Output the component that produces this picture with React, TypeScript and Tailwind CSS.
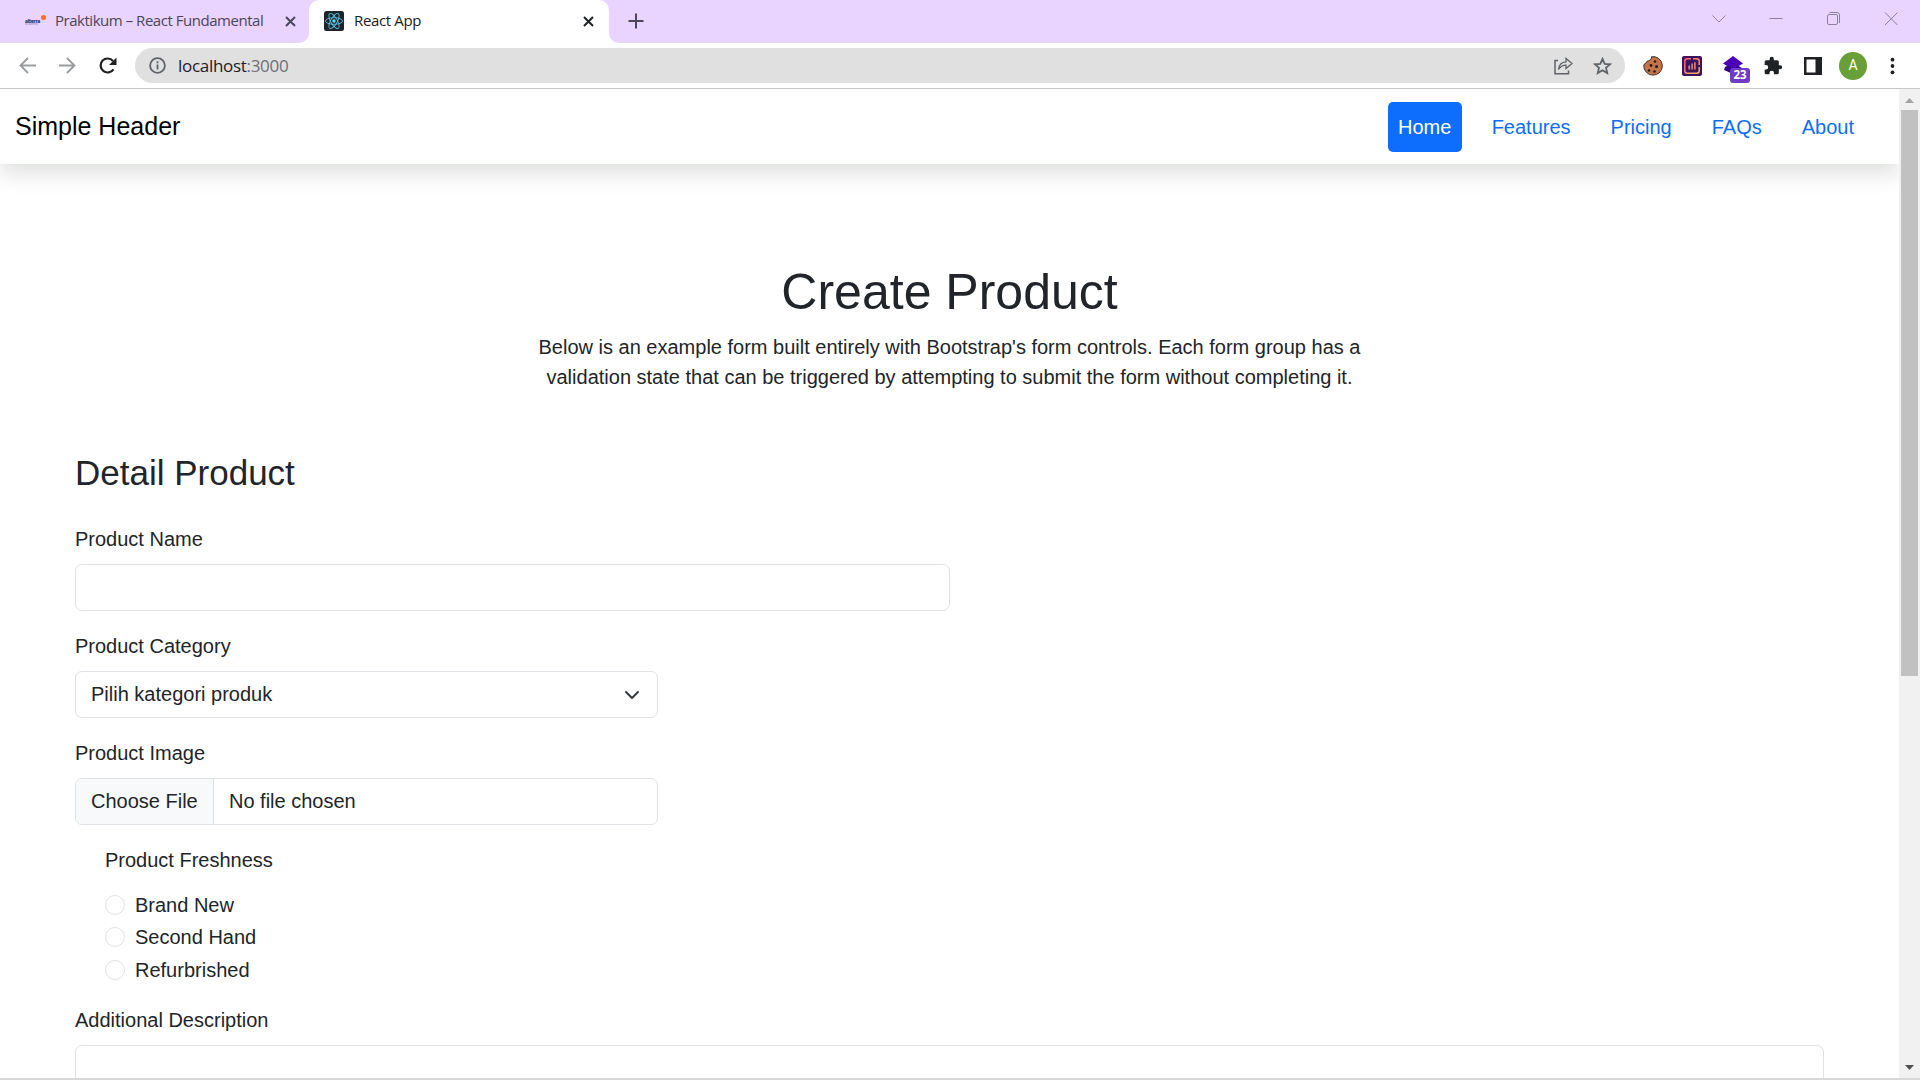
import React from "react";

const ui = "font-['Open_Sans','Noto_Sans',sans-serif]";

function ReactLogo() {
  return (
    <svg width="20" height="20" viewBox="0 0 20 20">
      <rect width="20" height="20" rx="2.5" fill="#20232a" />
      <g fill="none" stroke="#53c1de" strokeWidth="0.9">
        <ellipse cx="10" cy="10" rx="8.6" ry="3.3" />
        <ellipse cx="10" cy="10" rx="8.6" ry="3.3" transform="rotate(60 10 10)" />
        <ellipse cx="10" cy="10" rx="8.6" ry="3.3" transform="rotate(120 10 10)" />
      </g>
      <circle cx="10" cy="10" r="1.7" fill="#61dafb" />
    </svg>
  );
}

function AlterraLogo() {
  return (
    <div className="relative h-5 w-5 font-['Inter',sans-serif]">
      <span className="absolute left-0 top-[6px] text-[5px] leading-[8px] font-extrabold tracking-[-0.2px] text-[#1b2f66]">alterra</span>
      <span className="absolute left-0 top-[11px] text-[3px] leading-[5px] text-[#8b86ab]">academy</span>
      <span className="absolute left-[15.5px] top-[4px] h-[5px] w-[5px] rounded-full bg-[#ff6a21]" />
    </div>
  );
}

function Close({ color, className }: { color: string; className: string }) {
  return (
    <svg className={className} width="11" height="11" viewBox="0 0 11 11" stroke={color} strokeWidth="2" fill="none">
      <path d="M1 1l9 9M10 1l-9 9" />
    </svg>
  );
}

function TabStrip() {
  return (
    <div className="relative flex h-[43px] shrink-0 bg-[#e8d4ff]">
      <div className="flex w-[309px] items-center pl-[25px] pb-[1px]">
        <AlterraLogo />
        <span className={"ml-[10px] w-[212px] whitespace-nowrap pb-[2px] text-[15px] tracking-[-0.47px] text-[#4d4659] " + ui}>Praktikum – React Fundamental</span>
        <Close color="#4d4659" className="ml-[17.5px]" />
      </div>
      <div className="relative flex w-[300px] items-center rounded-t-[10px] bg-white pl-[15px] pb-[1px]">
        <svg className="absolute bottom-0 left-[-10px]" width="10" height="10"><path d="M10 0v10H0A10 10 0 0 0 10 0" fill="#fff" /></svg>
        <svg className="absolute bottom-0 right-[-10px]" width="10" height="10"><path d="M0 0v10h10A10 10 0 0 1 0 0" fill="#fff" /></svg>
        <ReactLogo />
        <span className={"ml-[10px] w-[229px] pb-[2px] text-[15px] tracking-[-0.35px] text-[#202124] " + ui}>React App</span>
        <Close color="#202124" className="ml-0" />
      </div>
      <svg className="ml-[19px] mt-[13px]" width="16" height="16" stroke="#4d4659" strokeWidth="2"><path d="M.5 8h15M8 .5v15" /></svg>
      <svg className="ml-auto mr-[21px] mt-[11px]" width="187" height="15" fill="none" stroke="#8d7f9e" strokeWidth="1">
        <path d="M.5 4.500l6.500 6.500 6.500-6.500M57.500 7.500h13M173 1.500l12.500 12.500M185.500 1.500L173 14" />
        <rect x="115.500" y="3.500" width="10" height="10" rx="1.500" />
        <path d="M117.500 1.500h7.500a2.500 2.500 0 0 1 2.500 2.500v8" />
      </svg>
    </div>
  );
}

function Toolbar() {
  return (
    <div className="flex h-[46px] shrink-0 items-center border-b border-[#c9c9c9] bg-white">
      <svg className="ml-[19px]" width="17" height="17" fill="none" stroke="#9a9b9d" strokeWidth="1.800"><path d="M17 8.500H1.500M9 1L1.500 8.500 9 16" /></svg>
      <svg className="ml-[23px]" width="17" height="17" fill="none" stroke="#9a9b9d" strokeWidth="1.800"><path d="M0 8.500h15.500M8 1l7.500 7.500L8 16" /></svg>
      <svg className="ml-[23px]" width="18" height="17" viewBox="0 0 18 17">
        <path d="M14.500 12.300A7 7 0 1 1 14 4" fill="none" stroke="#202124" strokeWidth="2.200" />
        <path d="M17.500 .5v7.500H10z" fill="#202124" />
      </svg>
      <div className="ml-[18px] flex h-[35px] w-[1490px] items-center rounded-full bg-[#e0e0e0] pl-[14px]">
        <svg width="17" height="17" fill="none" stroke="#5f6368" strokeWidth="1.800"><circle cx="8.500" cy="8.500" r="7.400" /><path d="M8.500 7.500v5M8.500 4.300v1.900" /></svg>
        <span className={"ml-[12px] text-[17px] tracking-[-0.3px] text-[#202124] " + ui}>localhost<span className="text-[#6d6f73]">:3000</span></span>
        <svg className="ml-auto" width="19" height="18" fill="none" stroke="#5f6368" strokeWidth="1.500">
          <path d="M4 3.500H1v13.200h13.500V13.500" />
          <path d="M4.500 12.500C5 7.500 8 5 12 4.800V1.500l6 5-6 5V8.200c-3.500 0-5.500 1.300-7.500 4.300z" strokeWidth="1.300" />
        </svg>
        <svg className="ml-[20px] mr-[13px]" width="19" height="18" viewBox="0 0 20 19" fill="none" stroke="#5f6368" strokeWidth="1.900"><path d="M10 2l2.300 5.200 5.700.5-4.300 3.700 1.300 5.600-5-3-5 3 1.300-5.600L2 7.700l5.700-.5z" /></svg>
      </div>
      <svg className="ml-[18px]" width="20" height="20">
        <path d="M8.500 .7C9 3 7 3.800 7 3.800 6 5.500 4 4.500 3.500 6 3 8 1 7.500 .8 9A9.300 9.300 0 1 0 8.500 .7z" fill="#c2744b" stroke="#3b2521" strokeWidth="0.900" />
        <g fill="#2b1a1a"><circle cx="12" cy="5.500" r="1.300" /><circle cx="8" cy="9.500" r="1.400" /><circle cx="13.500" cy="10.500" r="1.500" /><circle cx="6" cy="14.500" r="1.300" /><circle cx="11.500" cy="15.500" r="1.300" /></g>
      </svg>
      <svg className="ml-[19px]" width="20" height="20" fill="none">
        <defs><linearGradient id="stat" x1="0" y1="0" x2="1" y2="1" gradientUnits="objectBoundingBox"><stop stopColor="#ff5f86" /><stop offset="1" stopColor="#ffb567" /></linearGradient></defs>
        <rect width="20" height="20" rx="2" fill="#3d1458" />
        <path d="M9 2.800H5.300A2.500 2.500 0 0 0 2.800 5.300v9.400a2.500 2.500 0 0 0 2.500 2.500H14.700a2.500 2.500 0 0 0 2.500-2.500V11M17.200 9V5.300a2.500 2.500 0 0 0-2.500-2.500H11" stroke="url(#stat)" strokeWidth="1.400" />
        <path d="M6.500 9.500h1.400V13.500H6.500zM9.400 7.500h1.400v6H9.400zM12.200 6.200h1.400v7.300h-1.400z" fill="#ff8f78" />
      </svg>
      <div className="relative ml-[21px] h-5 w-5">
        <svg width="20" height="20"><path d="M2 11l8-4 9 5-9 6-9-4z" fill="#2e0482" /><path d="M10 0l10 7.500-10 6-10-6z" fill="#4b00b5" /></svg>
        <span className={"absolute left-[7px] top-[12px] flex h-[15px] w-[20px] items-center justify-center rounded-[3px] bg-[#6f3cc3] text-[11.5px] leading-none font-bold text-white " + ui}>23</span>
      </div>
      <svg className="ml-[20px]" width="20" height="20" viewBox="0 0 24 24" fill="#202124"><path d="M20.500 11H19V7a2 2 0 0 0-2-2h-4V3.500a2.500 2.500 0 0 0-5 0V5H4a2 2 0 0 0-2 2v3.800h1.500a2.700 2.700 0 0 1 0 5.400H2V20a2 2 0 0 0 2 2h3.800v-1.500a2.700 2.700 0 0 1 5.400 0V22H17a2 2 0 0 0 2-2v-4h1.500a2.500 2.500 0 0 0 0-5z" /></svg>
      <svg className="ml-[21px]" width="18" height="18"><path fillRule="evenodd" d="M0 0h18v18H0zM2.500 2.500v13h9v-13z" fill="#202124" /></svg>
      <span className={"ml-[17px] flex h-7 w-7 items-center justify-center rounded-full bg-[#689f38] text-[14px] text-white font-['Roboto',sans-serif]"}>A</span>
      <svg className="ml-[23px]" width="5" height="18" fill="#202124"><circle cx="2.500" cy="2.700" r="1.900" /><circle cx="2.500" cy="9" r="1.900" /><circle cx="2.500" cy="15.300" r="1.900" /></svg>
    </div>
  );
}

function Header() {
  return (
    <header className="relative flex h-[75px] items-center bg-white shadow-[0_10px_20px_rgba(0,20,10,0.13)]">
      <span className="ml-[15px] pb-[1px] text-[25px] text-black">Simple Header</span>
      <nav className="ml-auto mr-[35px] flex gap-5 text-[#0d6efd]">
        <a className="flex h-[50px] w-[74px] items-center justify-center rounded-[5px] bg-[#0d6efd] text-white">Home</a>
        {["Features", "Pricing", "FAQs", "About"].map((t) => (
          <a key={t} className="flex h-[50px] items-center px-[10px]">{t}</a>
        ))}
      </nav>
    </header>
  );
}

function Label({ children }: { children: React.ReactNode }) {
  return <div className="mb-[10px] leading-[30px]">{children}</div>;
}

const box = "flex h-[47px] items-center rounded-[7px] border border-[#dee2e6] bg-white";

function Page() {
  return (
    <main className="h-full min-w-0 flex-1 overflow-hidden bg-white font-['Liberation_Sans',Arial,sans-serif] text-[20px] leading-[30px] text-[#212529]">
      <Header />
      <div className="px-[75px]">
        <div className="mx-auto mt-[98px] w-[840px] text-center">
          <h1 className="text-[50px] leading-[60px]">Create Product</h1>
          <p className="mt-[10px]">Below is an example form built entirely with Bootstrap's form controls. Each form group has a validation state that can be triggered by attempting to submit the form without completing it.</p>
        </div>
        <h2 className="mt-[60px] text-[35px] leading-[42px]">Detail Product</h2>
        <div className="mt-[30px] w-[875px]">
          <Label>Product Name</Label>
          <div className={box} />
        </div>
        <div className="mt-[20px] w-[583px]">
          <Label>Product Category</Label>
          <div className={box + " justify-between pl-[15px] pr-[15px]"}>
            <span className="pb-[2px]">Pilih kategori produk</span>
            <svg className="mr-[1px]" width="18" height="14" viewBox="0 0 18 14" fill="none" stroke="#343a40" strokeWidth="2" strokeLinecap="round" strokeLinejoin="round"><path d="M3 4l6 6 6-6" /></svg>
          </div>
        </div>
        <div className="mt-[20px] w-[583px]">
          <Label>Product Image</Label>
          <div className={box + " overflow-hidden"}>
            <span className="flex h-full w-[138px] items-center border-r border-[#dee2e6] bg-[#f8f9fa] pb-[2px] pl-[15px]">Choose File</span>
            <span className="ml-[15px] pb-[2px]">No file chosen</span>
          </div>
        </div>
        <div className="ml-[30px] mt-[20px]">
          <Label>Product Freshness</Label>
          <div className="pt-[4.8px]">
            {["Brand New", "Second Hand", "Refurbrished"].map((t) => (
              <div key={t} className="mb-[2.5px] flex h-[30px] items-center">
                <span className="mr-[10px] h-5 w-5 rounded-full border border-[#dee2e6]" />
                {t}
              </div>
            ))}
          </div>
        </div>
        <div className="mt-[20.7px]">
          <Label>Additional Description</Label>
          <div className="h-[100px] rounded-[7px] border border-[#dee2e6]" />
        </div>
      </div>
    </main>
  );
}

function Scrollbar() {
  return (
    <div className="flex w-[21px] shrink-0 flex-col items-center bg-[#f1f1f1]">
      <svg className="mt-[9px]" width="9" height="5"><path d="M0 5l4.500-5L9 5z" fill="#a3a3a3" /></svg>
      <div className="mt-[7px] h-[566px] w-[17px] bg-[#c1c1c1]" />
      <svg className="mb-[8px] mt-auto" width="9" height="5"><path d="M0 0l4.500 5L9 0z" fill="#505050" /></svg>
    </div>
  );
}

export default function App() {
  return (
    <div className="flex h-[1080px] w-[1920px] flex-col overflow-hidden bg-white">
      <TabStrip />
      <Toolbar />
      <div className="flex min-h-0 flex-1">
        <Page />
        <Scrollbar />
      </div>
      <div className="h-[2px] shrink-0 bg-[#d8d8d8]" />
    </div>
  );
}
